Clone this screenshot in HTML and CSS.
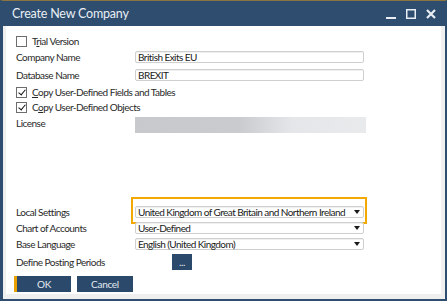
FILE: index.html
```html
<!DOCTYPE html>
<html>
	<head>
		<meta charset="utf-8">
		<title>Create New Company</title>
		<link rel="stylesheet" href="styles.css">
	</head>
	<body>
		<div class="window">
			<div class="titlebar">
				<span class="title">Create New Company</span>
				<div class="controls">
					<svg class="ctl" width="12" height="12" viewBox="0 0 12 12"><rect x="1" y="9" width="10" height="2" fill="#e9eef4"/></svg>
					<svg class="ctl" width="12" height="12" viewBox="0 0 12 12"><rect x="1.75" y="1.75" width="8.5" height="8.5" fill="none" stroke="#e9eef4" stroke-width="1.5"/></svg>
					<svg class="ctl" width="12" height="12" viewBox="0 0 12 12"><path d="M2 2 L10 10 M10 2 L2 10" stroke="#e9eef4" stroke-width="2.2"/></svg>
				</div>
			</div>
			<div class="frame">
				<div class="panel">
					<div class="row r-first">
						<span class="check"></span>
						<span class="opt">T<u>r</u>ial Version</span>
					</div>
					<div class="row">
						<span class="lbl">Company Name</span>
						<div class="field">British Exits EU</div>
					</div>
					<div class="row r-tall">
						<span class="lbl">Database Name</span>
						<div class="field">BREXIT</div>
					</div>
					<div class="row r-short">
						<span class="check on"></span>
						<span class="opt"><u>C</u>opy User-Defined Fields and Tables</span>
					</div>
					<div class="row">
						<span class="check on"></span>
						<span class="opt">C<u>o</u>py User-Defined Objects</span>
					</div>
					<div class="row r-license">
						<span class="lbl">License</span>
						<div class="license"></div>
					</div>

					<div class="row r-local">
						<span class="lbl">Local Settings</span>
						<div class="field select highlight">
							<span>United Kingdom of Great Britain and Northern Ireland</span>
							<span class="arrow"></span>
						</div>
					</div>
					<div class="row">
						<span class="lbl">Chart of Accounts</span>
						<div class="field select">
							<span>User-Defined</span>
							<span class="arrow"></span>
						</div>
					</div>
					<div class="row">
						<span class="lbl">Base Language</span>
						<div class="field select">
							<span>English (United Kingdom)</span>
							<span class="arrow"></span>
						</div>
					</div>
					<div class="row r-tall">
						<span class="lbl">Define Posting Periods</span>
						<button class="btn dots">...</button>
					</div>
					<div class="actions">
						<button class="btn primary">OK</button>
						<button class="btn">Cancel</button>
					</div>
				</div>
			</div>
		</div>
	</body>
</html>
```

FILE: styles.css
```css
*{
	margin: 0;
	padding: 0;
	box-sizing: border-box;
}
body{
	background-color: #fff;
	font-family: Lato, "Liberation Sans", sans-serif;
	font-size: 10px;
	color: #2a2a2a;
}
.window{
	width: 447px;
	height: 301px;
	display: flex;
	flex-direction: column;
	border-top: 1px solid #8c7441;
	border-left: 3px solid #2e4d6f;
	border-right: 2px solid #2e4d6f;
	border-bottom: 2px solid #2e4d6f;
	background-color: #2e4d6f;
}
.titlebar{
	height: 25px;
	display: flex;
	align-items: center;
	justify-content: space-between;
	padding: 0 8px 0 9px;
	color: #e9eef4;
}
.title{
	font-size: 12.5px;
	letter-spacing: -0.2px;
}
.controls{
	display: flex;
	gap: 8px;
}
.frame{
	flex: 1;
	background-color: #efefef;
	padding: 0 4px 5px 3px;
}
.panel{
	height: 100%;
	background-color: #fff;
	padding: 7px 0 0 10px;
}
.row{
	height: 16px;
	display: flex;
	align-items: center;
	white-space: nowrap;
}
.r-first{
	height: 16px;
}
.r-tall{
	height: 20px;
}
.r-short{
	height: 14px;
}
.r-license{
	height: 20px;
	align-items: flex-start;
}
.r-license .lbl{
	line-height: 16px;
}
.r-local{
	margin-top: 69px;
}
.lbl{
	width: 119px;
	letter-spacing: -0.5px;
}
.opt{
	margin-left: 5px;
	letter-spacing: -0.5px;
}
.check{
	width: 11px;
	height: 11px;
	border: 1px solid #6d6d6d;
	background-color: #fff;
	position: relative;
}
.check.on::after{
	content: "";
	position: absolute;
	left: 3px;
	top: 0px;
	width: 3px;
	height: 6px;
	border-right: 1.5px solid #111;
	border-bottom: 1.5px solid #111;
	transform: rotate(40deg);
}
.field{
	width: 229px;
	height: 12px;
	border: 1px solid #cfcfcf;
	border-radius: 2px;
	padding: 0 0 0 2px;
	line-height: 10px;
	letter-spacing: -0.55px;
	color: #1a1a1a;
	box-shadow: inset 0 1px 0 #f0f0f0;
	overflow: visible;
}
.select{
	display: flex;
	align-items: center;
	justify-content: space-between;
	padding-right: 3px;
	position: relative;
}
.arrow{
	flex-shrink: 0;
	width: 0;
	height: 0;
	border-left: 3.5px solid transparent;
	border-right: 3.5px solid transparent;
	border-top: 4px solid #1a1a1a;
}
.highlight::before{
	content: "";
	position: absolute;
	left: -5px;
	right: -4px;
	top: -10px;
	bottom: -7px;
	border: 2px solid #f2a900;
}
.license{
	width: 231px;
	height: 16px;
	margin-top: 2px;
	background: linear-gradient(to right, #c7c9cc 0%, #c9cbce 45%, #e4e6e9 68%, #e8eaec 100%);
}
.btn{
	height: 16px;
	border: none;
	background-color: #2b4a6b;
	color: #e4eaf1;
	font-family: Lato, "Liberation Sans", sans-serif;
	font-size: 10px;
	letter-spacing: -0.3px;
}
.dots{
	width: 20px;
	margin-left: 37px;
	line-height: 10px;
}
.actions{
	display: flex;
	gap: 6px;
	margin-top: 4px;
	margin-left: -2px;
}
.actions .btn{
	width: 56px;
}
.actions .primary{
	width: 57px;
	border-left: 3px solid #e8a100;
}
```
